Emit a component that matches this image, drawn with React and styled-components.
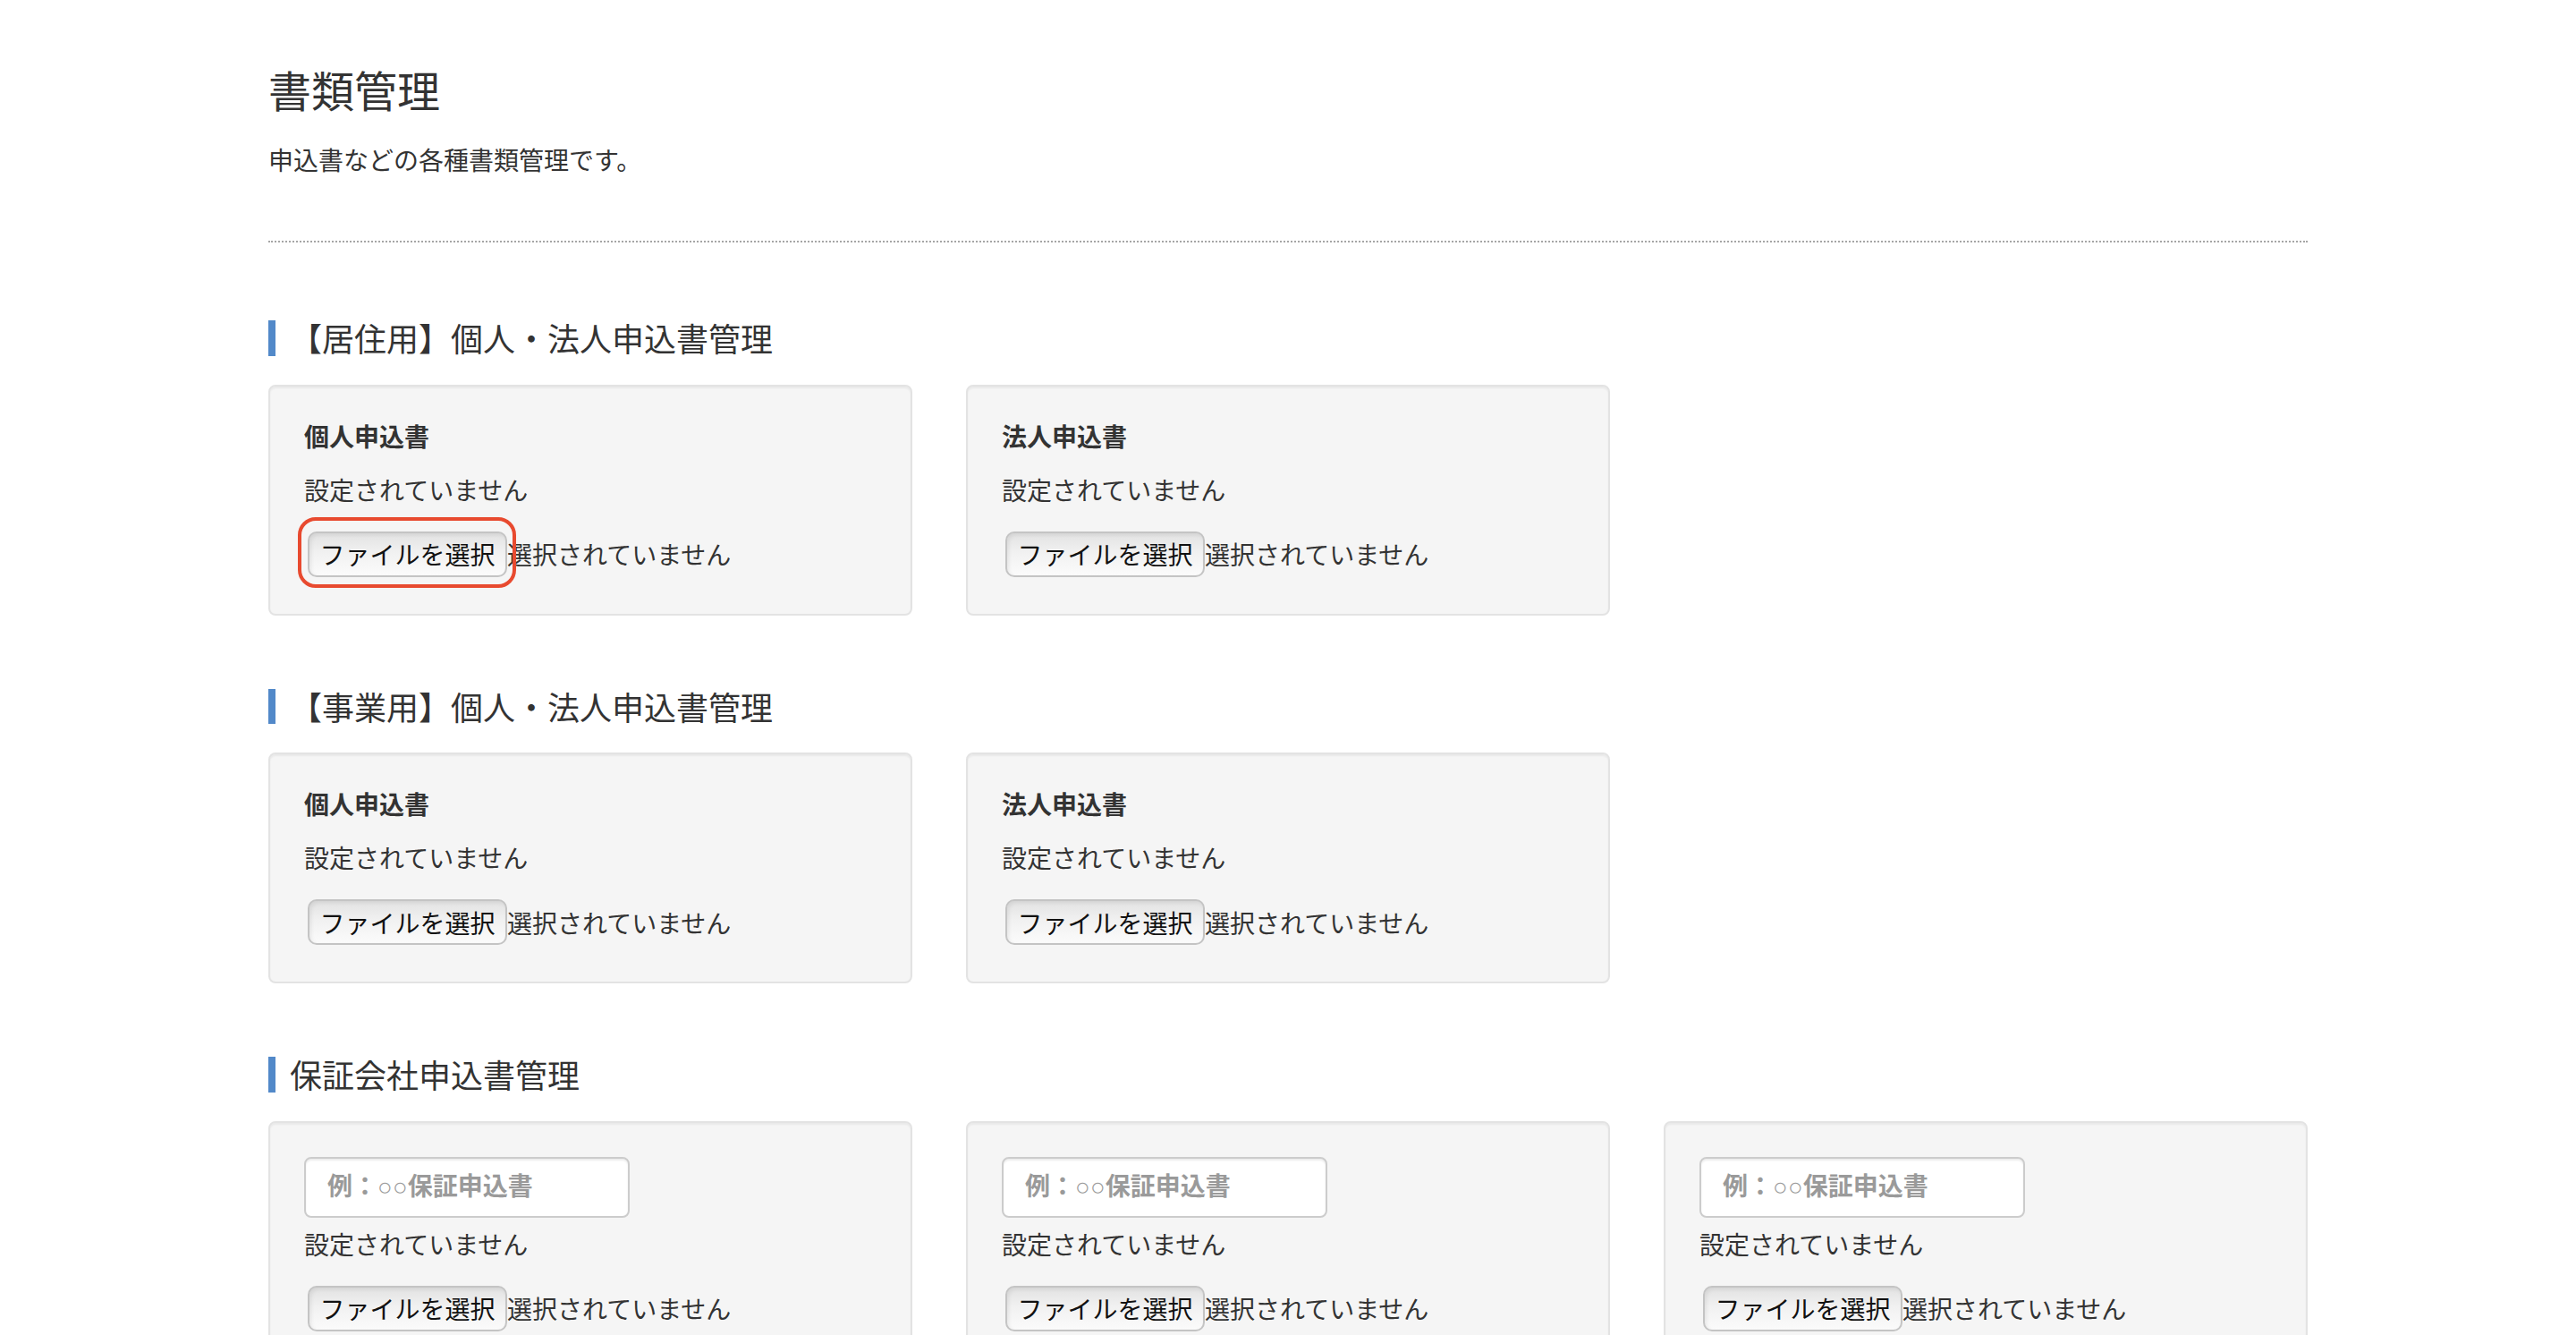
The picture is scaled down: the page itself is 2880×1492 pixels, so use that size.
import React from "react";
import styled, { createGlobalStyle } from "styled-components";

const GlobalStyle = createGlobalStyle`
  html { scrollbar-width: none; }
  html::-webkit-scrollbar, body::-webkit-scrollbar { display: none; }
  html, body {
    margin: 0;
    padding: 0;
    background: #ffffff;
  }
  body {
    font-family: "Noto Sans CJK JP", "Noto Sans", sans-serif;
    color: #333333;
    font-size: 28px;
    line-height: 40px;
  }
  * { box-sizing: border-box; }
`;

const Container = styled.main`
  width: 2280px;
  margin: 0 auto;
  padding-top: 71px;
  display: flex;
  flex-direction: column;
`;

const PageTitle = styled.h1`
  margin: 0;
  font-size: 48px;
  line-height: 56px;
  font-weight: 400;
  color: #333333;
`;

const Lead = styled.p`
  margin: 31px 0 0;
  font-size: 28px;
  line-height: 40px;
  color: #333333;
`;

const Divider = styled.hr`
  margin: 71px 0 0;
  height: 0;
  border: 0;
  border-top: 2px dotted #a6a6a6;
`;

const Section = styled.section`
  display: flex;
  flex-direction: column;
  margin-top: ${(p) => (p.$first ? "87px" : "82px")};
`;

const SectionTitle = styled.h2`
  margin: 0 0 32px;
  font-size: 36px;
  line-height: 39.6px;
  font-weight: 400;
  color: #333333;
  border-left: 8px solid #5289c9;
  padding-left: 16px;
`;

const CardGrid = styled.div`
  display: grid;
  grid-template-columns: repeat(3, 720px);
  column-gap: 60px;
`;

const Card = styled.div`
  background: #f5f5f5;
  border: 2px solid #e3e3e3;
  border-radius: 8px;
  box-shadow: inset 0 2px 2px rgba(0, 0, 0, 0.05);
  padding: 38px;
  display: flex;
  flex-direction: column;
  align-items: flex-start;
`;

const CardLabel = styled.label`
  display: block;
  font-size: 28px;
  line-height: 34px;
  font-weight: 700;
  color: #333333;
  margin-bottom: 23px;
`;

const NameInput = styled.input`
  width: 364px;
  height: 68px;
  margin: 0 0 9px;
  padding: 0 24px;
  background: #ffffff;
  border: 2px solid #cccccc;
  border-radius: 8px;
  box-shadow: inset 0 2px 2px rgba(0, 0, 0, 0.075);
  font-family: "Liberation Sans", "Noto Sans CJK JP", sans-serif;
  font-size: 28px;
  color: #555555;
  outline: none;
  &::placeholder {
    color: #9a9a9a;
    font-weight: 700;
  }
`;

const Status = styled.div`
  font-size: 28px;
  line-height: 40px;
  color: #333333;
  margin-bottom: 24px;
`;

const FileRow = styled.div`
  display: flex;
  align-items: center;
  height: 57px;
`;

const ButtonWrap = styled.span`
  position: relative;
  display: inline-flex;
  margin-left: 4px;
`;

const FileButton = styled.button`
  height: 51px;
  width: 223px;
  padding: 0;
  border: 2px solid #c4c4c4;
  border-radius: 10px;
  background: linear-gradient(to bottom, #e2e2e2 0%, #f1f1f1 45%, #fbfbfb 100%);
  box-shadow: inset 2px 2px 4px rgba(0, 0, 0, 0.07);
  font-family: "Noto Sans CJK JP", "Noto Sans", sans-serif;
  font-size: 28px;
  line-height: 1;
  color: #111111;
  cursor: pointer;
`;

const Highlight = styled.span`
  position: absolute;
  left: -11px;
  top: -16px;
  width: 244px;
  height: 79px;
  border: 4.5px solid #e84a2f;
  border-radius: 20px;
  pointer-events: none;
`;

const FileName = styled.span`
  font-size: 28px;
  line-height: 40px;
  color: #333333;
`;

const sections = [
  {
    title: "【居住用】個人・法人申込書管理",
    items: [
      { label: "個人申込書", highlight: true },
      { label: "法人申込書" },
    ],
  },
  {
    title: "【事業用】個人・法人申込書管理",
    items: [{ label: "個人申込書" }, { label: "法人申込書" }],
  },
  {
    title: "保証会社申込書管理",
    items: [{ input: true }, { input: true }, { input: true }],
  },
];

function DocCard({ item }) {
  return (
    <Card>
      {item.input ? (
        <NameInput type="text" placeholder="例：○○保証申込書" />
      ) : (
        <CardLabel>{item.label}</CardLabel>
      )}
      <Status>設定されていません</Status>
      <FileRow>
        <ButtonWrap>
          <FileButton type="button">ファイルを選択</FileButton>
          {item.highlight && <Highlight />}
        </ButtonWrap>
        <FileName>選択されていません</FileName>
      </FileRow>
    </Card>
  );
}

export default function App() {
  return (
    <>
      <GlobalStyle />
      <Container>
        <PageTitle>書類管理</PageTitle>
        <Lead>申込書などの各種書類管理です。</Lead>
        <Divider />
        {sections.map((s, i) => (
          <Section key={s.title} $first={i === 0}>
            <SectionTitle>{s.title}</SectionTitle>
            <CardGrid>
              {s.items.map((item, j) => (
                <DocCard key={j} item={item} />
              ))}
            </CardGrid>
          </Section>
        ))}
      </Container>
    </>
  );
}
